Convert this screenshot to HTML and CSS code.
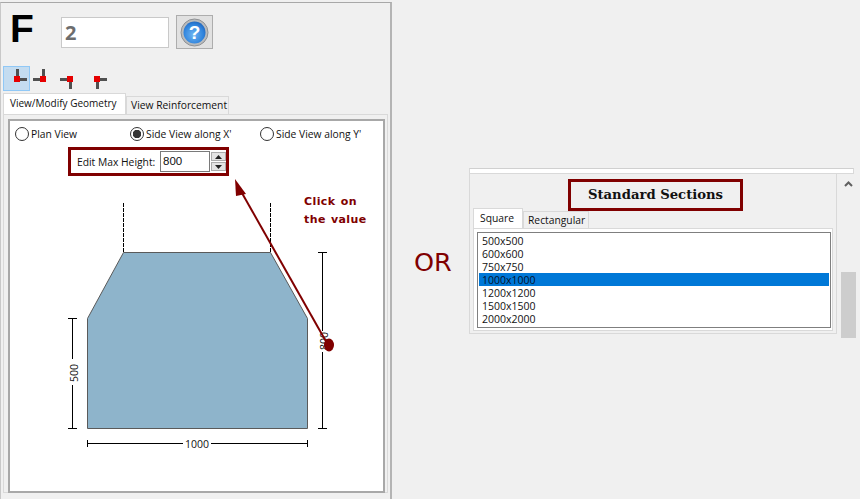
FILE: index.html
```html
<!DOCTYPE html>
<html lang="en">
<head>
<meta charset="utf-8">
<title>Section geometry</title>
<link rel="stylesheet" href="styles.css">
</head>
<body>
<main class="page">
  <section class="left">
    <div class="head">
      <div class="letter">F</div>
      <div class="idbox">2</div>
      <button class="help" type="button" aria-label="Help">
        <svg width="35" height="32" viewBox="0 0 35 32">
          <defs>
            <radialGradient id="ball" cx="45%" cy="60%" r="65%">
              <stop offset="0" stop-color="#6db4f2"/>
              <stop offset="0.7" stop-color="#2f83dc"/>
              <stop offset="1" stop-color="#1f62b8"/>
            </radialGradient>
          </defs>
          <circle cx="17.5" cy="16.5" r="13.5" fill="#b9bbbd" stroke="#8f9194"/>
          <circle cx="17.5" cy="16.5" r="11" fill="url(#ball)"/>
          <text x="17.5" y="23" class="qmark" text-anchor="middle">?</text>
        </svg>
      </button>
    </div>
    <div class="toolbar">
      <div class="tool active">
        <svg width="27" height="25" viewBox="0 0 27 25"><path class="tee" d="M13 3h3v9h8v3h-8v0h-3z"/><rect class="red" x="11" y="10" width="6" height="6"/></svg>
      </div>
      <div class="tool">
        <svg width="27" height="25" viewBox="0 0 27 25"><path class="tee" d="M12 3h3v9h-3v3H3v-3h9z"/><rect class="red" x="10" y="10" width="6" height="6"/></svg>
      </div>
      <div class="tool">
        <svg width="27" height="25" viewBox="0 0 27 25"><path class="tee" d="M3 12h12v11h-3v-8H3z"/><rect class="red" x="10" y="10" width="6" height="6"/></svg>
      </div>
      <div class="tool">
        <svg width="27" height="25" viewBox="0 0 27 25"><path class="tee" d="M12 12h11v3h-8v8h-3z"/><rect class="red" x="10" y="10" width="6" height="6"/></svg>
      </div>
    </div>
    <div class="tabs main-tabs">
      <div class="tab on">View/Modify Geometry</div>
      <div class="tab">View Reinforcement</div>
    </div>
    <div class="pane">
      <div class="canvas">
        <div class="radios">
          <label class="radio r1"><span class="dot"></span>Plan View</label>
          <label class="radio r2"><span class="dot sel"></span>Side View along X'</label>
          <label class="radio"><span class="dot"></span>Side View along Y'</label>
        </div>
        <div class="edit">
          <span class="edit-label">Edit Max Height:</span>
          <span class="edit-input">800</span>
          <span class="spin">
            <span class="spin-btn"><svg width="7" height="4" viewBox="0 0 7 4"><path d="M3.5 0L7 4H0z"/></svg></span>
            <span class="spin-btn"><svg width="7" height="4" viewBox="0 0 7 4"><path d="M0 0h7L3.5 4z"/></svg></span>
          </span>
        </div>
        <svg class="drawing" width="373" height="312" viewBox="10 178 373 312">
          <polygon class="shape" points="123.5,252.5 270.5,252.5 307.5,318.5 307.5,428.5 87.5,428.5 87.5,318.5"/>
          <path class="dash" d="M123.5 203V252M270.5 203V252"/>
          <path class="dim" d="M322.5 252V331M322.5 352V428.5M318 252.5H327M318 428.5H327"/>
          <path class="dim" d="M72.5 318V359M72.5 385V428.5M68 318.5H77M68 428.5H77"/>
          <path class="dim" d="M87.5 440V447M307.5 440V447M87.5 443.5H183M211 443.5H307"/>
          <text class="dimtext" x="197" y="448" text-anchor="middle">1000</text>
          <text class="dimtext" text-anchor="middle" transform="translate(78 373) rotate(-90)">500</text>
          <text class="dimtext" text-anchor="middle" transform="translate(328 341) rotate(-90)">800</text>
          <line class="arrow" x1="328" y1="345" x2="238" y2="186"/>
          <polygon class="arrowfill" points="235,179 246,194 236,196"/>
          <ellipse class="arrowfill" cx="329" cy="345" rx="5" ry="6.5"/>
          <text class="note" x="304" y="205">Click on</text>
          <text class="note" x="304" y="223">the value</text>
        </svg>
      </div>
    </div>
  </section>

  <div class="or">OR</div>

  <section class="right">
    <div class="strip"></div>
    <div class="right-body">
      <div class="group">
        <div class="title-row"><h2 class="title">Standard Sections</h2></div>
        <div class="tabs sec-tabs">
          <div class="tab on">Square</div>
          <div class="tab">Rectangular</div>
        </div>
        <div class="sec-pane">
          <ul class="list">
            <li>500x500</li>
            <li>600x600</li>
            <li>750x750</li>
            <li class="picked">1000x1000</li>
            <li>1200x1200</li>
            <li>1500x1500</li>
            <li>2000x2000</li>
          </ul>
        </div>
      </div>
      <div class="scroll">
        <svg class="up" width="9" height="6" viewBox="0 0 9 6"><path d="M1 5l3.5-3.5L8 5" fill="none" stroke="#606060" stroke-width="2"/></svg>
        <div class="thumb"></div>
      </div>
    </div>
  </section>
</main>
</body>
</html>
```
FILE: styles.css
```css
* { box-sizing: border-box; }
html, body { margin: 0; padding: 0; }
body {
  width: 860px;
  height: 499px;
  overflow: hidden;
  background: #f0f0f0;
  font-family: "Open Sans", "Liberation Sans", sans-serif;
  font-size: 10.3px;
  color: #111;
}
.page { display: flex; align-items: flex-start; height: 499px; }

/* left panel */
.left {
  width: 392px;
  height: 499px;
  margin-top: 2px;
  padding-left: 2px;
  border-top: 1px solid #a8a8a8;
  border-right: 2px solid #b4b4b4;
  border-left: 1px solid #c8c8c8;
  flex: none;
}
.head { display: flex; align-items: flex-start; height: 63px; }
.letter {
  width: 58px;
  padding-left: 7px;
  font: bold 39px/1 "Liberation Sans", sans-serif;
  color: #000;
  margin-top: 6px;
}
.idbox {
  width: 108px;
  height: 31px;
  margin-top: 14px;
  padding-left: 3px;
  background: #fff;
  border: 1px solid #c9c9c9;
  font: bold 20px/29px "Open Sans", "Liberation Sans", sans-serif;
  color: #6d6d6d;
}
.help {
  width: 37px;
  height: 34px;
  margin: 12px 0 0 7px;
  padding: 0;
  background: #e1e1e1;
  border: 1px solid #adadad;
  display: flex;
}
.qmark { font: bold 19px "Liberation Sans", sans-serif; fill: #fff; }

.toolbar { display: flex; height: 27px; }
.tool { width: 27px; height: 25px; }
.tool svg { display: block; }
.tool.active { background: #c4dcf0; box-shadow: inset 0 0 0 1px #90c8f6; }
.tee { fill: #505050; }
.red { fill: #e60000; }

.tabs { display: flex; align-items: flex-end; }
.tab {
  border: 1px solid #d9d9d9;
  border-bottom: 0;
  background: #f0f0f0;
  padding: 0 4px;
  height: 18px;
  line-height: 17px;
  white-space: nowrap;
}
.tab.on { background: #fff; height: 21px; line-height: 19px; }
.main-tabs .tab.on { width: 123px; padding-left: 6px; font-size: 10px; }
.main-tabs .tab { width: 103px; }

.pane {
  width: 385px;
  height: 379px;
  background: #f0f0f0;
  border: 1px solid #d9d9d9;
  padding: 4px 2px 0 4px;
}
.canvas {
  width: 377px;
  height: 374px;
  background: #fff;
  border: 2px solid #a8a8a8;
  padding: 6px 0 0 5px;
}
.radios { display: flex; height: 14px; align-items: center; }
.radio { display: flex; align-items: center; gap: 2px; white-space: nowrap; }
.r1 { width: 115px; }
.r2 { width: 130px; }
.dot {
  width: 14px;
  height: 14px;
  border: 1px solid #333;
  border-radius: 50%;
  background: #fff;
  flex: none;
  display: block;
}
.dot.sel { background: radial-gradient(circle, #333 0 4px, #fff 4.5px); }
.edit {
  display: flex;
  align-items: center;
  width: 161px;
  height: 29px;
  margin: 6px 0 0 53px;
  padding-left: 6px;
  border: 3px solid #800000;
  background: #fff;
}
.edit-label { width: 83px; white-space: nowrap; }
.edit-input {
  width: 50px;
  height: 21px;
  border: 1px solid #7a7a7a;
  padding-left: 2px;
  line-height: 19px;
  font-family: "Liberation Sans", sans-serif;
  font-size: 11.5px;
}
.spin { display: flex; flex-direction: column; gap: 1px; margin-left: 1px; }
.spin-btn {
  width: 15px;
  height: 9px;
  background: #e4e4e4;
  border: 1px solid #acacac;
  display: flex;
  align-items: center;
  justify-content: center;
}
.spin-btn svg { display: block; fill: #222; }
.drawing { display: block; margin: 2px 0 0 -5px; }
.shape { fill: #8eb4cb; stroke: #5a5a5a; stroke-width: 1; }
.dash { stroke: #000; stroke-width: 1; stroke-dasharray: 4 1; fill: none; }
.dim { stroke: #000; stroke-width: 1; fill: none; }
.dimtext { font-family: "Open Sans", "Liberation Sans", sans-serif; font-size: 10.5px; fill: #111; }
.arrow { stroke: #800000; stroke-width: 2; }
.arrowfill { fill: #800000; }
.note {
  font-family: "DejaVu Sans", sans-serif;
  font-weight: bold;
  font-size: 11px;
  letter-spacing: 0.4px;
  word-spacing: 1px;
  fill: #800000;
}

/* OR */
.or {
  width: 77px;
  flex: none;
  margin-top: 247px;
  padding-left: 22px;
  font: 25.5px/30px "DejaVu Sans", sans-serif;
  color: #800000;
}

/* right panel */
.right { flex: none; width: 391px; margin-top: 168px; }
.strip {
  height: 6px;
  width: 385px;
  background: #fff;
  border: 1px solid #d9d9d9;
  border-top-color: #d0d0d0;
}
.right-body { display: flex; height: 164px; }
.group {
  width: 368px;
  height: 160px;
  border-left: 1px solid #d9d9d9;
  border-right: 1px solid #d9d9d9;
  border-bottom: 1px solid #d9d9d9;
  padding: 0 0 0 3px;
}
.title-row { height: 34px; padding: 5px 0 0 95px; }
.title {
  width: 175px;
  height: 32px;
  margin: 0;
  border: 3px solid #800000;
  font: bold 13.2px/26px "DejaVu Serif", serif;
  text-align: center;
  color: #111;
  white-space: nowrap;
}
.sec-tabs { height: 20px; position: relative; }
.sec-tabs .tab.on { width: 50px; height: 20px; padding-left: 6px; }
.sec-tabs .tab { width: 66px; height: 17px; }
.sec-pane {
  width: 360px;
  height: 103px;
  background: #fff;
  border: 1px solid #d9d9d9;
  padding: 3px 1px 0 3px;
}
.list {
  list-style: none;
  margin: 0;
  padding: 1px 1px;
  height: 96px;
  border: 1px solid #7f7f7f;
  font-size: 10.5px;
  line-height: 14px;
}
.list li { height: 13px; padding-left: 3px; white-space: nowrap; }
.list .picked { background: #0078d7; color: #04122a; }

.scroll {
  width: 15px;
  margin-left: 4px;
  height: 164px;
  background: #f0f0f0;
  display: flex;
  flex-direction: column;
  align-items: center;
}
.up { margin-top: 7px; flex: none; }
.thumb { width: 15px; height: 66px; margin-top: 85px; background: #cdcdcd; flex: none; }
```
